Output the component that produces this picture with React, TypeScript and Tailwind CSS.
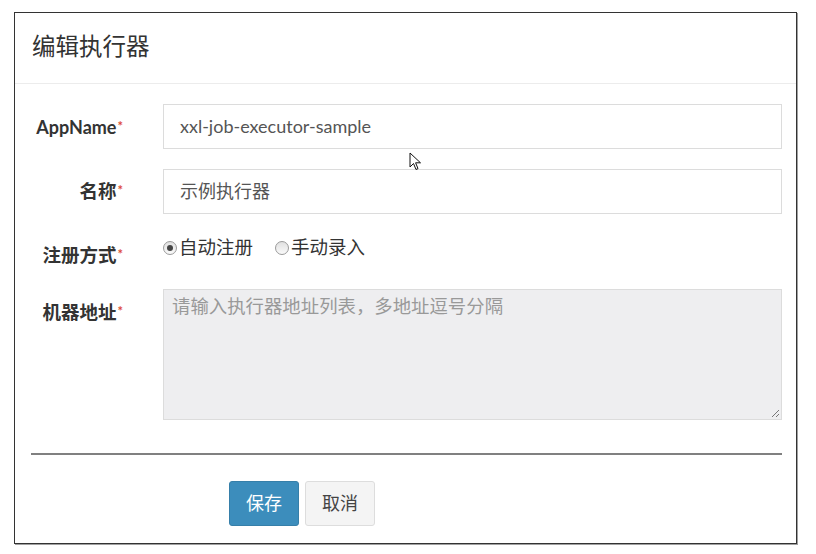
import React from "react";

const font = { fontFamily: '"Lato","Noto Sans CJK SC",sans-serif' };

function Star() {
  return <span className="text-[#dd4b39] text-[13px] font-bold relative -top-[3px] ml-[1px]">*</span>;
}

function Radio({ checked }: { checked?: boolean }) {
  return (
    <span className="inline-flex items-center justify-center w-[14px] h-[14px] rounded-full border border-[#9a9a9a] bg-gradient-to-b from-[#e0e0e0] to-[#fafafa] mr-[2px]">
      {checked && <span className="block w-[6px] h-[6px] rounded-full bg-[#444]" />}
    </span>
  );
}

export default function App() {
  return (
    <div className="w-[816px] h-[554px] bg-white relative" style={font}>
      <div className="absolute left-[14px] top-[12px] w-[783px] h-[532px] border border-[#333] shadow-[1px_1px_0_#a0a0a0] bg-white flex flex-col">
        <div className="h-[71px] border-b border-[#ececec] flex items-center pl-[17px] pb-[2px]">
          <span className="text-[23.5px] text-[#333] font-normal leading-none">编辑执行器</span>
        </div>
        <div className="flex flex-col pt-[20px] pr-[14px]">
          <div className="flex items-center h-[45px]">
            <div className="w-[108px] text-right text-[18px] font-bold text-[#333] pt-[2px]">AppName<Star /></div>
            <div className="ml-[40px] flex-1 h-[45px] border border-[#dcdcdc] flex items-center pl-[16px] text-[18px] text-[#555]">
              xxl-job-executor-sample
            </div>
          </div>
          <div className="flex items-center h-[45px] mt-[20px]">
            <div className="w-[108px] text-right text-[18.5px] font-bold text-[#333]">名称<Star /></div>
            <div className="ml-[40px] flex-1 h-[45px] border border-[#dcdcdc] flex items-center pl-[16px] text-[18px] text-[#555]">
              示例执行器
            </div>
          </div>
          <div className="flex items-start h-[55px] mt-[20px]">
            <div className="w-[108px] text-right text-[18.5px] font-bold text-[#333] pt-[8px]">注册方式<Star /></div>
            <div className="ml-[40px] flex items-center text-[18.5px] text-[#333]">
              <Radio checked />
              <span>自动注册</span>
              <span className="w-[22px]" />
              <Radio />
              <span>手动录入</span>
            </div>
          </div>
          <div className="flex items-start">
            <div className="w-[108px] text-right text-[18.5px] font-bold text-[#333] pt-[10px]">机器地址<Star /></div>
            <div className="ml-[40px] flex-1 h-[131px] border border-[#dcdcdc] bg-[#eeeef0] pl-[8px] pt-[3px] text-[18.4px] text-[#999] relative">
              请输入执行器地址列表，多地址逗号分隔
              <svg className="absolute right-[1px] bottom-[1px]" width="10" height="10" viewBox="0 0 10 10">
                <path d="M9 2 L2 9 M9 6 L6 9" stroke="#777" strokeWidth="1" />
              </svg>
            </div>
          </div>
          <div className="ml-[16px] mt-[33px] h-[2px] bg-[#808080]" />
          <div className="flex mt-[26px] ml-[214px] gap-[6px]">
            <button className="w-[70px] h-[45px] rounded-[3px] bg-[#3c8dbc] border border-[#367fa9] text-white text-[18px]">保存</button>
            <button className="w-[70px] h-[45px] rounded-[3px] bg-[#f4f4f4] border border-[#ddd] text-[#444] text-[18px]">取消</button>
          </div>
        </div>
      </div>
      <svg className="absolute left-[409px] top-[152px]" width="14" height="20" viewBox="0 0 14 20">
        <path d="M1 1 L1 15 L4.5 11.5 L7 17.5 L9 16.6 L6.6 10.8 L11.5 10.8 Z" fill="white" stroke="#111" strokeWidth="1" strokeLinejoin="round" />
      </svg>
    </div>
  );
}
